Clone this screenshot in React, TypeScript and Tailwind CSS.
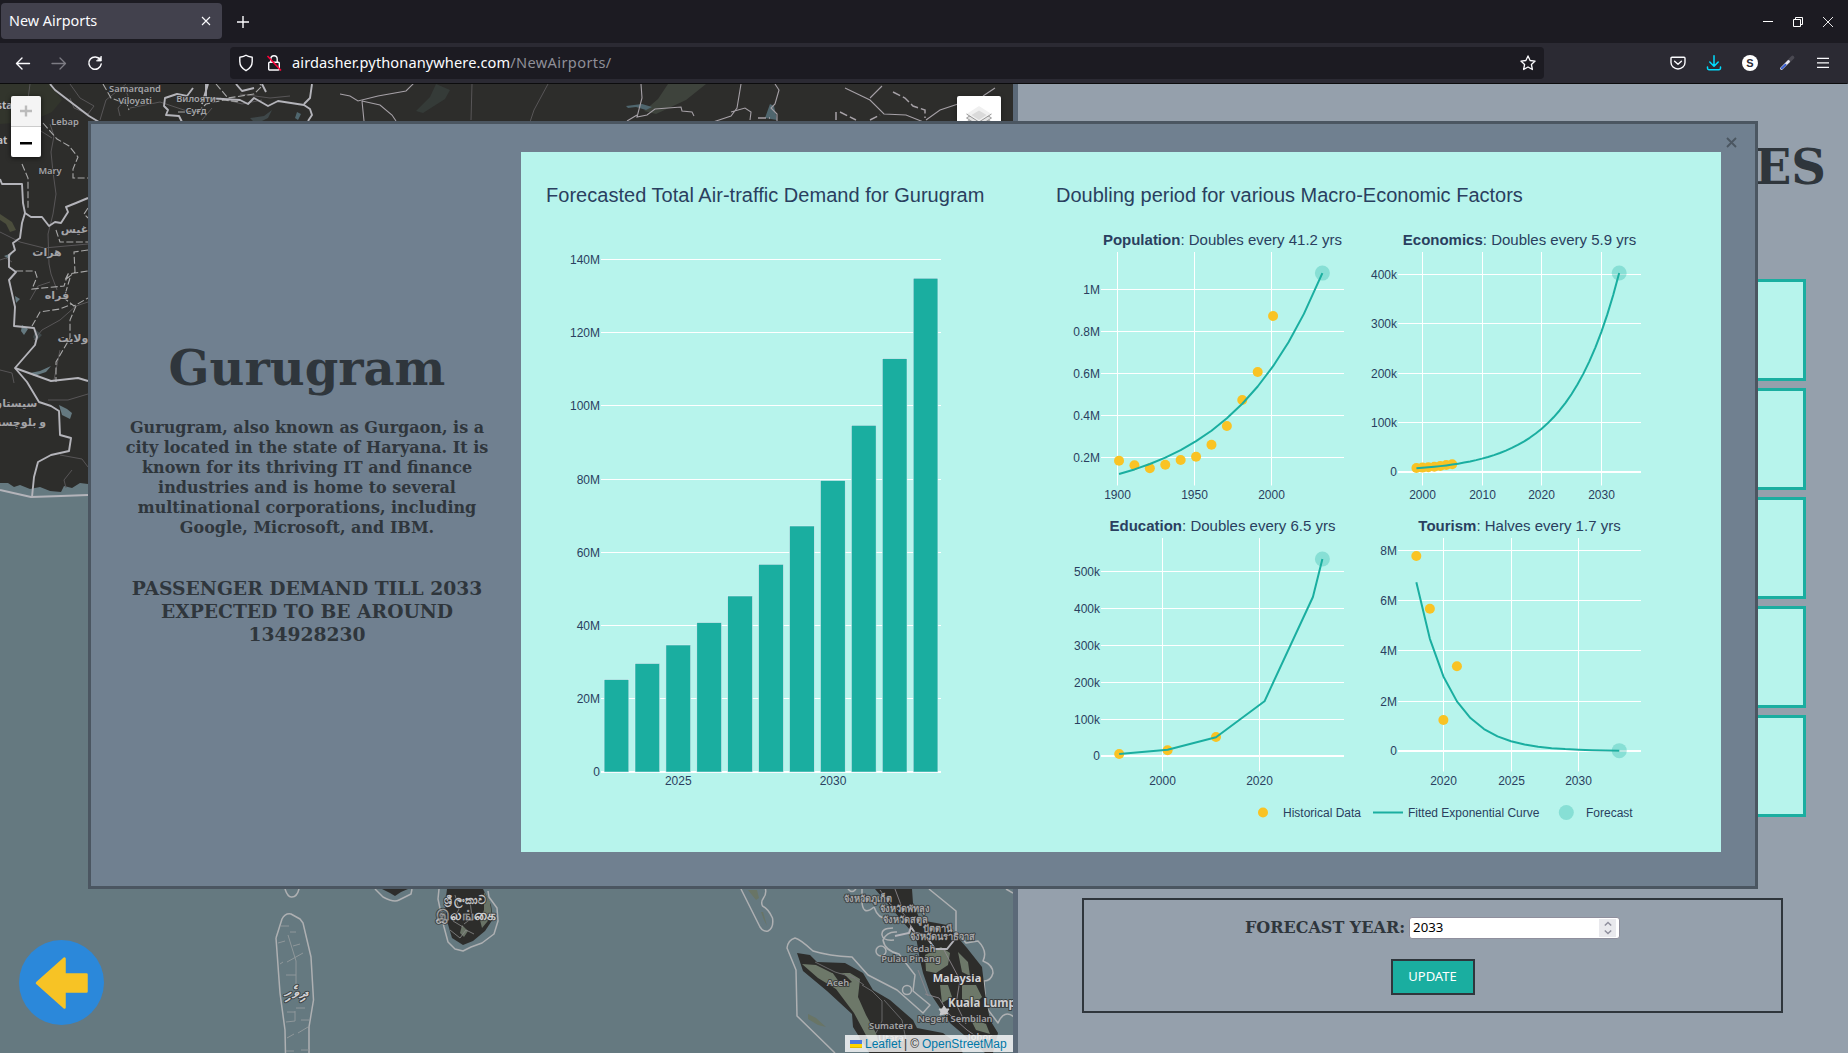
import React from "react";

type Pt = [number, number];

const pts = (list: Pt[]) => list.map((p) => p.join(",")).join(" ");

/* ---------- Browser chrome ---------- */

function TabStrip() {
  return (
    <div className="flex h-[43px] shrink-0 items-center justify-between bg-[#1c1b22]">
      <div className="flex items-center">
        <div className="ml-px mt-[-1px] flex h-9 w-[221px] items-center justify-between rounded bg-[#42414d] pl-2 pr-[11px] text-[14.4px] text-[#fbfbfe]">
          <span>New Airports</span>
          <svg width="10" height="10" viewBox="0 0 10 10" stroke="#fbfbfe" strokeWidth="1.1">
            <path d="M1 1l8 8M9 1l-8 8" />
          </svg>
        </div>
        <svg className="ml-[15px]" width="12" height="12" viewBox="0 0 12 12" stroke="#fbfbfe" strokeWidth="1.4">
          <path d="M6 0v12M0 6h12" />
        </svg>
      </div>
      <div className="flex items-center gap-5 pr-[14px]">
        <svg width="10" height="10" viewBox="0 0 10 10" stroke="#fff">
          <path d="M0 4.500h10" />
        </svg>
        <svg width="10" height="10" viewBox="0 0 10 10" fill="none" stroke="#fff">
          <path d="M.5 2.500h7v7h-7zM2.500 2.500v-2h7v7h-2" />
        </svg>
        <svg width="10" height="10" viewBox="0 0 10 10" stroke="#fff" strokeWidth="0.9">
          <path d="M0 0l10 10M10 0L0 10" />
        </svg>
      </div>
    </div>
  );
}

function Toolbar() {
  return (
    <div className="flex h-[41px] shrink-0 items-center border-b border-[#0c0c0d] bg-[#2b2a33] text-[#fbfbfe]">
      <div className="flex w-[230px] items-center gap-[20px] pl-[15px]">
        <svg width="16" height="16" viewBox="0 0 16 16" fill="none" stroke="#fbfbfe" strokeWidth="1.4" strokeLinecap="round" strokeLinejoin="round">
          <path d="M14.500 8.500H1.500M7 3L1.500 8.500 7 14" />
        </svg>
        <svg width="16" height="16" viewBox="0 0 16 16" fill="none" stroke="#7d7c84" strokeWidth="1.3" strokeLinecap="round" strokeLinejoin="round">
          <path d="M1 8.500h13.500M9 3l5.500 5.500L9 14" />
        </svg>
        <svg width="16" height="18" viewBox="0 0 16 18" fill="none" stroke="#fbfbfe" strokeWidth="1.5" strokeLinecap="round">
          <path d="M13.200 5.600A6.200 6.200 0 1 0 14.200 10" />
          <path d="M14.300 2.500v4.500h-4.500z" fill="#fbfbfe" strokeWidth="0.800" strokeLinejoin="round" />
        </svg>
      </div>
      <div className="flex h-8 w-[1314px] items-center rounded bg-[#1c1b22] pl-2 pr-2">
        <svg width="16" height="18" viewBox="0 0 16 18" fill="none" stroke="#fbfbfe" strokeWidth="1.400" strokeLinejoin="round">
          <path d="M8 1.300C6.300 2.600 3.900 3 1.800 3.300v4.300c0 4 2 7 6.200 9.100 4.200-2.100 6.200-5.100 6.200-9.100V3.300C12.100 3 9.700 2.600 8 1.300z" />
        </svg>
        <svg className="ml-[12px]" width="16" height="18" viewBox="0 0 16 18" fill="none" stroke="#fbfbfe" strokeWidth="1.400">
          <rect x="2.700" y="8.200" width="10.600" height="7.800" rx="1" />
          <path d="M4.800 8V5a3.200 3.200 0 0 1 6.400 0v3" />
          <path d="M1.500 2l13.500 14.500" stroke="#ff0039" strokeWidth="1.600" />
        </svg>
        <span className="ml-[10px] text-[14.600px] whitespace-nowrap">
          <span className="tracking-[0.090px]">airdasher.pythonanywhere.com</span>
          <span className="tracking-[0.370px] text-[#8f8f98]">/NewAirports/</span>
        </span>
        <svg className="ml-auto" width="16" height="16" viewBox="0 0 16 16" fill="none" stroke="#fbfbfe" strokeWidth="1.300" strokeLinejoin="round">
          <path d="M8 .9l2.100 4.600 5 .6-3.700 3.400 1 5L8 12l-4.400 2.500 1-5L.9 6.100l5-.6z" />
        </svg>
      </div>
      <div className="ml-auto flex items-center gap-[20px] pr-[16px]">
        <svg width="16" height="16" viewBox="0 0 16 16" fill="none" stroke="#fbfbfe" strokeWidth="1.400" strokeLinecap="round" strokeLinejoin="round">
          <path d="M2 2.200h12c.6 0 1 .4 1 1V7.500a7 6.500 0 0 1-14 0V3.200c0-.6.4-1 1-1zM4.600 6.200L8 9.200l3.400-3" />
        </svg>
        <svg width="16" height="16" viewBox="0 0 16 16" fill="none" stroke="#00ddff" strokeWidth="1.500" strokeLinecap="round" strokeLinejoin="round">
          <path d="M8 .8v10M3.800 7L8 11.200 12.200 7M1.500 12v1.300c0 .8.6 1.400 1.400 1.400h10.200c.8 0 1.400-.6 1.400-1.400V12" />
        </svg>
        <div className="mr-px flex size-4 items-center justify-center rounded-full bg-white font-['Liberation_Sans'] text-[11px] leading-none font-bold text-[#2b2a33]">S</div>
        <svg width="16" height="16" viewBox="0 0 16 16" strokeLinecap="round">
          <path d="M10 6l3.500-3.500" stroke="#4a4952" strokeWidth="3.600" />
          <path d="M2.500 13.500L9.500 6.500" stroke="#e8e8f4" strokeWidth="2.800" />
          <path d="M2.800 13.200L6.500 9.800" stroke="#3a5fd0" strokeWidth="2" />
        </svg>
        <svg width="16" height="16" viewBox="0 0 16 16" stroke="#fbfbfe" strokeWidth="1.200">
          <path d="M2 3.400h12M2 7.900h12M2 12.400h12" />
        </svg>
      </div>
    </div>
  );
}

/* ---------- Map ---------- */

type Label = { x: number; y: number; t: string; s?: number; c?: string; w?: number; a?: "start" | "middle" | "end" };

const labels: Label[] = [
  { x: 135, y: 92, t: "Samarqand" },
  { x: 135, y: 103.5, t: "Viloyati" },
  { x: 196, y: 102, t: "Вилояти" },
  { x: 196, y: 114, t: "Суғд" },
  { x: 65, y: 125, t: "Lebap" },
  { x: 50, y: 174, t: "Mary" },
  { x: -3, y: 109, t: "sta", s: 10, c: "#bfbfc3", w: 700, a: "start" },
  { x: -3, y: 144, t: "at", s: 10, c: "#bfbfc3", w: 700, a: "start" },
  { x: 76, y: 233, t: "غيس.", s: 11 },
  { x: 47, y: 256, t: "هرات", s: 11 },
  { x: 57, y: 299, t: "فراه", s: 11 },
  { x: 73, y: 342, t: "ولايت", s: 11 },
  { x: 15, y: 407, t: "سيستان", s: 11 },
  { x: 18, y: 426, t: "و بلوچست", s: 11 },
  { x: 868, y: 902, t: "จังหวัดภูเก็ต" },
  { x: 905, y: 912, t: "จังหวัดพัทลุง" },
  { x: 905, y: 923, t: "จังหวัดสตูล" },
  { x: 937, y: 931.5, t: "ปัตตานี" },
  { x: 942, y: 940, t: "จังหวัดนราธิวาส" },
  { x: 921, y: 952, t: "Kedah" },
  { x: 911, y: 961.5, t: "Pulau Pinang" },
  { x: 957, y: 981.5, t: "Malaysia", s: 11, c: "#d6d6d8", w: 700 },
  { x: 948, y: 1006.5, t: "Kuala Lumpur", s: 11.5, c: "#cfcfd1", w: 700, a: "start" },
  { x: 955, y: 1021.500, t: "Negeri Sembilan" },
  { x: 891, y: 1029, t: "Sumatera" },
  { x: 891, y: 1041, t: "Utara" },
  { x: 980, y: 1040, t: "Johor" },
  { x: 838, y: 985.5, t: "Aceh" },
  { x: 465, y: 904, t: "ශ්‍රී ලංකාව", s: 11, c: "#c4c4c6" },
  { x: 466, y: 920, t: "இலங்கை", s: 13.5, c: "#d0d0d2", w: 700 },
  { x: 296, y: 998, t: "ދިވެހި", s: 16, c: "#d0d0d2", w: 700 },
];

function MapCanvas() {
  return (
    <svg className="block h-full w-full bg-[#657980]" viewBox="0 84 1013 969" preserveAspectRatio="none">
      <path
        d="M0 84H1013V700H400V470L88 484 80 483 72 488 64 486 61 492 50 491 40 487 30 489 20 485 14 487 8 483 0 483z"
        fill="#2d2d2b"
      />
      <path d="M0 84H50L62 100 52 112 30 122 0 124z" fill="#32352c" />
      <path d="M668 84h38l-20 16-30 14-12-3 14-12z" fill="#3e433c" />
      <path d="M436 84l14 6-5 9-22 14-7-2 14-14z" fill="#353b38" />
      <path d="M0 214l12 8 4 8-6 2-4-8-6-4z" fill="#4b4d3c" />
      <path d="M59 405l8 4 5 4-2 6-8-4zM30 373l10-2 11-5-5 6-12 4zM22 325l6 4-4 6-3-4zM4 256l8-3-3 6zM15 296l5 3-4 4z" fill="#657980" />
      <path d="M626 106l16-2 10 3-6 3-10-3-8 1zM297 112l4 2-3 6-3-2zM88 100l3 3M80 104l3 4M765 118l5-14 4 2 3 14z" fill="#4f666e" />
      <path d="M250 118l14-2 8-6-4 8-12 6zM36 330l6 5-6 6-3-4z" fill="#3f484a" />

      {/* minor roads */}
      <g fill="none" stroke="#5c5a5c" strokeWidth="0.900">
        <path d="M50 124l4 12-3 16 2 20 3 22-3 20-5 20 1 30 2 10 6 16" />
        <path d="M0 232l20 10 24 6 44-4M30 84l-4 30 10 14 16 10M0 260l6-2 6 4" />
        <path d="M88 302l-12 4-16 14-18 10-8 10M0 370l12 3 2 10M48 400l20 0 20-6M60 455l22 4 6 8" />
        <path d="M70 84l10 14 14 8-6 8-14-6-4-10M124 86l4 10-10 12 2 8" />
        <path d="M472 84l-1 36M548 84l-14 26-4 12M240 94l30 4 20-2M212 108l-10 12M130 108l30-6 30 10M220 98l22 6 20-4" />
        <path d="M100 120l6-20 20-16M30 300l8-14 12-4M60 350l-4 20-2 10M72 470l-8 10 2 8" />
      </g>
      {/* major roads */}
      <g fill="none" stroke="#a5a0a6" strokeWidth="1.100">
        <path d="M340 94l10 2 8 5 20-5 28-5 10-10M362 101l2 20M362 101l18 4 12 10 4 6" />
        <path d="M641 84l1 14-5 19 10-2 8-6 26-2 1 4 10 1 2 4M637 115l-10 6M741 84l-4 24-6 8-18 6M731 112l14-4 6 4-1 8 M775 84l4 6-4 14-4 4 6 6v9" />
        <path d="M845 88l25 12 14 14 22 1 20 8M870 98l12-12M926 120l14-10 18-6M995 88l-12 8" />
        <path d="M758 118l12 0M836 120v-8M840 112l16 8M870 120l10-5M893 92l12 6 8 8 12 4v8" strokeDasharray="8 3" strokeWidth="1.500" />
      </g>
      {/* province borders */}
      <g fill="none" stroke="#a8a8a8" strokeWidth="1.100" strokeDasharray="7 2.500">
        <path d="M43 123l14 16 12 7 9 11-5 12v9h15" />
        <path d="M56 230l4 12h28M88 250l-14 2 1 20-10 8 3-6 20-3M68 274l-4 12-32 3 5-12-2-6-19 0" />
        <path d="M70 278l-6 20 10 8 14-8M76 306l-6 14v18l-14 24v20M32 326l8-14 20-3 12-5" />
        <path d="M22 164l6 14v32M103 84l8 14 16 6 2 6M88 208l-4 6 4 4" />
        <path d="M178 112l20 0 8-8 18-4 16 2M216 84l12 14 26-4 8-8-8-8" />
      </g>
      {/* national borders */}
      <g fill="none" stroke="#b4b4ba" strokeWidth="1.900" strokeLinejoin="round">
        <path d="M50 84l5 6 34 26 10 6" />
        <path d="M0 179l2 5h20l1 19 2 10 6 4 11 0 7 9 6-4 6 1 7-11-2-5 10-4 12-5" />
        <path d="M25 213l-3 10-2 15-7 5 2 7-6 5v12l7 5-7 8 6 27-1 19 20 2 3 9-2 8-20 23 12 14 12 20 12 4 8 5 1 24 11 3-2 13-18 4-13 7-4 15-2 20" />
        <path d="M15 368l36 13 27-3 10 3" />
        <path d="M0 490l31 7 30-1 27-1" />
        <path d="M193 88l-6 8-10-2-12 4-1 8 4 4-2 5 13 1 3 6M206 84v14l34 2 8 4 6-6 14 8 10-5 26 4 6 4 2 6-4 6M312 84l-2 14-6 6" />
        <path d="M236 84l6 7 12-3M262 84l4 8" />
        <path d="M208 84l-6 20" />
      </g>

      {/* Maldives and southern India */}
      <g fill="none" stroke="#aeb0b2" strokeWidth="1.500" strokeLinejoin="round">
        <path d="M285 889q3 9 7 8 5 0 7-8M276 938l6-19q3-6 9-5l9 5 3 4 8 34 2.500 43-4.500 27v26M276 938l4 55 5 37 .5 24" />
        <path d="M375 889l8 8q11 6 16 3l12-6 1-5M439 889l-1 10 6 28 4 15 7 7 8 2 8-4 11-4 12-9 4-13-1-13-8-11-1-6" />
      </g>
      <g fill="none" stroke="#8f979a" strokeWidth="1">
        <path d="M281 926h8M278 943l7-2M288 935l8 26v24M290 932h6M293 946l7-2M287 962l16-9M286 975h10M287 1012h8M296 1008h9M286 1022l9-1v-10M301 1020h8M298 1033l10-6M287 1038l7-4M286 1051h8M301 1050h8M280 964l3-2" />
      </g>
      <path d="M382 889l8 4 5 3 6-4 7-3z" fill="#2d2d2b" />
      <path d="M447 889l-2 16 2 16 5 17 11 7 10-4 12-10 8-12-2-14-8-16z" fill="#2d2d2b" />
      <path d="M484 892l6 10 2 14-10 12-2-8 4-10zM462 925l6 6-4 6-4-4z" fill="#697366" />
      <path d="M450 930l10 8 6-8 8 4M455 895l4 14-6 12 10 6M470 900l2 18-8 6" fill="none" stroke="#8b8b8b" strokeWidth="0.800" />

      {/* Nicobar islands and Sumatra */}
      <g fill="none" stroke="#aeb0b2" strokeWidth="1.500" strokeLinejoin="round">
        <path d="M741 889l19 38q3 5 8 4 6-3 4.500-13-4-9-10-12-2-4 1-8 3-4 2-9" />
        <path d="M835 1053l-38-37-1-46-9-22q1-8 8-10 5 1 18 13 16 5 39 6l16 18 29 15 26 23 7-8-17-14 2-16-10-13-6-8q-14-3-16-14 4-9 14-8M893 928q-12 0-11 7 1 6 12 5M874 907q-12 10-12-7v-11M874 907q4 12 14 12" />
        <path d="M929 889l27 22v20l10 12 12-2q10 10 5 20 10 4 10 12-2 8-9 8l2 26 12 16q6-14 16-6l4 12 7 6v10M848 889q4 5 8 0M1006 889l7 4" />
        <circle cx="881" cy="951" r="5" />
        <circle cx="907" cy="990" r="4.500" />
      </g>
      <path d="M748 890l8 10 3-2-2-8zM761 912l3 8 3 6-4-14zM808 1014l8 4 10 9-8-2-10-6z" fill="#697566" />
      <path d="M797 953l13 2 7 7 28 1 18 10 10 17 17 10 23 20 4 8 26 5 17 13 3 8H870l-17-27-1-13-25-23-24-20z" fill="#2d2d2b" />
      <path d="M802 964l14 1 16 8 18 0 10 6-2 18 8 18 10 18 4 14-12-8-14-26-18-24-18-11z" fill="#6d7869" />
      <path d="M832 972l12 2 8 8-10 4zM856 1020l4 20 8 6z" fill="#2d2d2b" />
      <path d="M862 985l10 6 10 10v20l-6 12M884 1000l18 20 4 20M850 975l14 10M815 962l20 10 20 6" fill="none" stroke="#77777a" strokeWidth="0.800" />

      {/* Malay peninsula */}
      <path d="M875 889h37l1 14 7 17 27 5 20 23 15 19 3 26 5 27 8 13-5 20h-8l-35-30-20-30-7-20-3-13-4-23-23-27z" fill="#2d2d2b" />
      <path d="M925 955l16-8 9 6-2 12-12 8-10-2zM958 952l10 10 2 14-8-4zM962 985l14 0 6 12-8 8-12-6zM940 985l8 0 4 12-10 6zM970 1018l16 6 4 10-14-4z" fill="#6d7869" />
      <path d="M895 936l14-3 2-6 4 6 10 2 10 14 12 0 8-10" fill="none" stroke="#b4b4ba" strokeWidth="2" />
      <path d="M925 994l14 4 10 16 18 16 20 14M880 890l10 14 14 10 8 14M944 950l16 30-4 24 10 20M895 889l6 16M918 970l10 26" fill="none" stroke="#8c878c" strokeWidth="0.900" />
      <path d="M944 1006l2 3 3 0-2 3 1 3-4-1-4 1 1-3-2-3 3 0z" fill="#c9c9cb" stroke="#c9c9cb" />

      <g fontFamily="'Noto Sans','DejaVu Sans',sans-serif" stroke="#2b2b2b" strokeWidth="2" strokeLinejoin="round" className="[paint-order:stroke]">
        {labels.map((l) => (
          <text key={l.t} x={l.x} y={l.y} fontSize={l.s ?? 9.3} fill={l.c ?? "#a3a3a6"} fontWeight={l.w ?? 600} textAnchor={l.a ?? "middle"} strokeOpacity="0.700">
            {l.t}
          </text>
        ))}
      </g>
    </svg>
  );
}

function MapPane() {
  return (
    <div className="relative h-full w-[1013px] shrink-0 overflow-hidden">
      <MapCanvas />
      <div className="absolute top-3 left-[11px] w-[30px] overflow-hidden rounded-xs shadow-[0_1px_5px_rgba(0,0,0,0.65)]">
        <div className="flex h-[31px] items-center justify-center border-b border-[#ccc] bg-[#f4f4f4]">
          <svg width="12" height="12" viewBox="0 0 12 12" stroke="#bbb" strokeWidth="2.400">
            <path d="M6 .5v11M0 6h12" />
          </svg>
        </div>
        <div className="flex h-[30px] items-center justify-center bg-white">
          <svg width="12" height="12" viewBox="0 0 12 12" stroke="#000" strokeWidth="2.400">
            <path d="M0 7.200h12" />
          </svg>
        </div>
      </div>
      <div className="absolute top-3 right-3 flex size-[44px] items-center justify-center rounded-xs bg-white shadow-[0_1px_5px_rgba(0,0,0,0.4)]">
        <svg width="26" height="26" viewBox="0 0 26 26">
          <path d="M13 9L25.500 17 13 25 .5 17z" fill="#d5d5d5" stroke="#8a8a8a" strokeWidth="0.800" />
          <path d="M13 5L25.500 13 13 21 .5 13z" fill="#e3e3e3" stroke="#8a8a8a" strokeWidth="0.800" />
          <path d="M13 1L25.500 9 13 17 .5 9z" fill="#f0f0f0" />
          <path d="M13 5.500L20.500 10 13 15 5.500 10z" fill="#dadada" />
          <path d="M.5 9L13 17 25.500 9" fill="none" stroke="#8a8a8a" strokeWidth="0.900" />
        </svg>
      </div>
      <div className="absolute bottom-[28px] left-[19px] flex size-[85px] items-center justify-center rounded-full bg-[#2b88da]">
        <svg width="54" height="54" viewBox="0 0 54 54">
          <path d="M2 27L29.500 2.500V18.500H51.500V35.500H29.500V51.500z" fill="#f7c325" stroke="#f7c325" strokeWidth="2.500" strokeLinejoin="round" />
        </svg>
      </div>
      <div className="absolute right-0 bottom-px flex h-[17px] w-[168px] items-center bg-white/80 pl-[5px] font-['Liberation_Sans'] text-[12px] whitespace-nowrap text-[#0078a8]">
        <svg className="mr-[3px]" width="12" height="8" viewBox="0 0 12 8">
          <path fill="#4c7be1" d="M0 0h12v4H0z" />
          <path fill="#ffd500" d="M0 4h12v3H0z" />
          <path fill="#e0bc00" d="M0 7h12v1H0z" />
        </svg>
        <span>Leaflet</span>
        <span className="px-[3px] text-[#333]">|</span>
        <span className="pr-[3px] text-[#333]">©</span>
        <span>OpenStreetMap</span>
      </div>
    </div>
  );
}

/* ---------- Side panel ---------- */

function SidePanel() {
  return (
    <div className="flex h-full flex-1 flex-col items-center border-l-[5px] border-[#5b6978] bg-[#95a0ac] pr-px font-['DejaVu_Serif'] font-bold text-[#2f363c]">
      <h1 className="mt-[55px] mr-[21px] self-end text-[48px] leading-[56px]">ES</h1>
      <div className="mt-[84px] flex w-[747px] flex-col gap-[7px]">
        {[0, 1, 2, 3, 4].map((i) => (
          <div key={i} className="h-[102px] border-[3px] border-[#1aaea0] bg-[#b7f4ec]" />
        ))}
      </div>
      <div className="mt-[81px] flex h-[115px] w-[701px] flex-col items-center border-2 border-[#2f363c]">
        <div className="mt-[17px] flex h-[22px] items-center gap-1 text-[16px]">
          <span className="whitespace-nowrap">FORECAST YEAR:</span>
          <div className="flex h-[22px] w-[211px] items-center justify-between rounded-[3px] border border-[#8f8f9d] bg-white pr-[3px] pl-[3px] font-['Noto_Sans'] text-[13.200px] font-normal text-black">
            <span>2033</span>
            <div className="flex h-[18px] w-[17px] items-center justify-center bg-[#e9e9ed]">
              <svg width="8" height="14" viewBox="0 0 8 14" fill="none" stroke="#8f8f9d" strokeWidth="1.500">
                <path d="M.8 4.500L4 1.500l3.200 3M.8 9.500L4 12.500l3.200-3" />
              </svg>
            </div>
          </div>
        </div>
        <div className="mt-5 flex h-9 w-[84px] items-center justify-center border-2 border-[#2f363c] bg-[#1aaea0] font-['Noto_Sans'] text-[13px] font-normal text-white">
          UPDATE
        </div>
      </div>
    </div>
  );
}

/* ---------- Charts ---------- */

const TEAL = "#1aaea0";
const GOLD = "#f9c324";

const barTops = [679.6, 663.5, 645, 622.6, 596, 564.3, 526, 480.6, 425.3, 358.7, 278.2];

function BarChart() {
  const ticks: [string, number][] = [
    ["140M", 259.5], ["120M", 332.5], ["100M", 405.5], ["80M", 479.5], ["60M", 552.5], ["40M", 625.5], ["20M", 698.5],
  ];
  return (
    <g>
      <text x="546" y="201.500" fontSize="20" letterSpacing="0.025">Forecasted Total Air-traffic Demand for Gurugram</text>
      {ticks.map(([t, y]) => (
        <g key={t}>
          <path d={`M601 ${y}H941`} stroke="#fff" />
          <text x="600" y={y + 4.3} textAnchor="end">{t}</text>
        </g>
      ))}
      <path d="M601 772H941" stroke="#fff" strokeWidth="2" />
      <text x="600" y="776" textAnchor="end">0</text>
      {barTops.map((y, i) => (
        <rect key={y} x={604.1 + i * 30.909} y={y} width={24.73} height={772 - y} fill={TEAL} stroke="#e5ecf6" strokeWidth="0.500" />
      ))}
      <text x="678.300" y="784.600" textAnchor="middle">2025</text>
      <text x="833" y="784.600" textAnchor="middle">2030</text>
    </g>
  );
}

type PlotProps = {
  name: string;
  rest: string;
  x0: number;
  x1: number;
  top: number;
  bottom: number;
  xt: [string, number][];
  yt: [string, number][];
  dots: Pt[];
  line: Pt[];
};

function ScatterPlot({ name, rest, x0, x1, top, bottom, xt, yt, dots, line }: PlotProps) {
  const end = line[line.length - 1];
  return (
    <g>
      <text x={(x0 + x1) / 2} y={top - 7} fontSize="15" textAnchor="middle">
        <tspan fontWeight="700">{name}</tspan>
        {rest}
      </text>
      {xt.map(([t, x]) => (
        <g key={t}>
          <path d={`M${x} ${top}V${bottom}`} stroke="#fff" />
          <text x={x} y={bottom + 13.100} textAnchor="middle">{t}</text>
        </g>
      ))}
      {yt.map(([t, y]) => (
        <g key={t}>
          <path d={`M${x0} ${y}H${x1}`} stroke="#fff" strokeWidth={t === "0" ? 2 : 1} />
          <text x={x0 - 1} y={y + 4.200} textAnchor="end">{t}</text>
        </g>
      ))}
      {dots.map(([x, y]) => (
        <circle key={`${x}-${y}`} cx={x} cy={y} r="5" fill={GOLD} />
      ))}
      <polyline points={pts(line)} fill="none" stroke={TEAL} strokeWidth="2" strokeLinejoin="round" />
      <circle cx={end[0]} cy={end[1]} r="7.500" fill={TEAL} fillOpacity="0.300" />
    </g>
  );
}

const popX = (y: number) => 1117.5 + (y - 1900) * 1.5405;
const ecoX = (y: number) => 1422.4 + (y - 2000) * 5.963;
const touX = (y: number) => 1443.4 + (y - 2020) * 13.53;

const popDots: Pt[] = [460.7, 465.3, 468.2, 464.7, 460, 456.7, 444.7, 426, 400, 372, 316].map((y, i) => [popX(1901 + i * 10), y]);
const popLine: Pt[] = [1901, 1911, 1921, 1931, 1941, 1951, 1961, 1971, 1981, 1991, 2001, 2011, 2021, 2033].map((yr) => [
  popX(yr),
  499.5 - 210 * 0.1214 * Math.pow(8.88, (yr - 1901) / 132),
]);
const ecoDots: Pt[] = [468, 467.6, 467.2, 466.7, 466, 465, 464.3].map((y, i) => [ecoX(1999 + i), y]);
const ecoLine: Pt[] = Array.from({ length: 35 }, (_, i) => [ecoX(1999 + i), 472 - 49.33 * 0.0745 * Math.pow(54.15, i / 34)]);
const touLine: Pt[] = Array.from({ length: 16 }, (_, i) => [touX(2018 + i), 751 - 25.1 * 6.72 * Math.pow(0.665, i)]);

function Charts() {
  return (
    <svg
      className="block shrink-0 bg-[#b7f4ec] font-['Liberation_Sans']"
      width="1200"
      height="700"
      viewBox="521 152 1200 700"
      fontSize="12"
      fill="#2a3f5f"
    >
      <BarChart />
      <text x="1056" y="201.500" fontSize="20">Doubling period for various Macro-Economic Factors</text>
      <ScatterPlot
        name="Population"
        rest=": Doubles every 41.2 yrs"
        x0={1101} x1={1344} top={252} bottom={485.500}
        xt={[["1900", 1117.5], ["1950", 1194.5], ["2000", 1271.5]]}
        yt={[["1M", 289.5], ["0.8M", 331.5], ["0.6M", 373.5], ["0.4M", 415.5], ["0.2M", 457.5]]}
        dots={popDots}
        line={popLine}
      />
      <ScatterPlot
        name="Economics"
        rest=": Doubles every 5.9 yrs"
        x0={1398} x1={1641} top={252} bottom={485.500}
        xt={[["2000", 1422.5], ["2010", 1482.5], ["2020", 1541.5], ["2030", 1601.5]]}
        yt={[["400k", 274.5], ["300k", 323.5], ["200k", 373.5], ["100k", 422.5], ["0", 472]]}
        dots={ecoDots}
        line={ecoLine}
      />
      <ScatterPlot
        name="Education"
        rest=": Doubles every 6.5 yrs"
        x0={1101} x1={1344} top={538} bottom={771.500}
        xt={[["2000", 1162.5], ["2020", 1259.5]]}
        yt={[["500k", 571.5], ["400k", 608.5], ["300k", 645.5], ["200k", 682.5], ["100k", 719.5], ["0", 756]]}
        dots={[[1119.2, 754], [1167.6, 750.3], [1216, 737]]}
        line={[[1119.2, 754], [1167.6, 749.8], [1216, 737.3], [1264.5, 701.3], [1312.9, 597], [1322.4, 559]]}
      />
      <ScatterPlot
        name="Tourism"
        rest=": Halves every 1.7 yrs"
        x0={1398} x1={1641} top={538} bottom={771.500}
        xt={[["2020", 1443.5], ["2025", 1511.5], ["2030", 1578.5]]}
        yt={[["8M", 550.5], ["6M", 600.5], ["4M", 650.5], ["2M", 701.5], ["0", 751]]}
        dots={[[touX(2018), 556], [touX(2019), 608.7], [touX(2020), 720], [touX(2021), 666.3]]}
        line={touLine}
      />
      <circle cx="1263" cy="812.500" r="5" fill={GOLD} />
      <text x="1283" y="816.600">Historical Data</text>
      <path d="M1373 812.500H1403" stroke={TEAL} strokeWidth="2" />
      <text x="1408" y="816.600">Fitted Exponential Curve</text>
      <circle cx="1566.300" cy="812.500" r="7.500" fill={TEAL} fillOpacity="0.300" />
      <text x="1586" y="816.600">Forecast</text>
    </svg>
  );
}

/* ---------- Dialog ---------- */

function CityDialog() {
  return (
    <div className="absolute top-[121px] left-[88px] flex h-[768px] w-[1670px] border-[3px] border-[#4b5661] bg-[#708090]">
      <div className="flex w-[430px] shrink-0 flex-col items-center pt-[216px] pl-0.5 text-center font-['DejaVu_Serif'] font-bold text-[#2f363c]">
        <h2 className="text-[48px] leading-[56px]">Gurugram</h2>
        <p className="mt-[22px] text-[16px] leading-[20px] whitespace-nowrap">
          Gurugram, also known as Gurgaon, is a<br />
          city located in the state of Haryana. It is<br />
          known for its thriving IT and finance<br />
          industries and is home to several<br />
          multinational corporations, including<br />
          Google, Microsoft, and IBM.
        </p>
        <p className="mt-[39px] text-[18.720px] leading-[23px] whitespace-nowrap">
          PASSENGER DEMAND TILL 2033<br />
          EXPECTED TO BE AROUND<br />
          134928230
        </p>
      </div>
      <div className="pt-7">
        <Charts />
      </div>
      <svg className="mt-[13px] ml-[5px]" width="11" height="11" viewBox="0 0 11 11" stroke="#4b5661" strokeWidth="1.900">
        <path d="M1 1l9 9M10 1l-9 9" />
      </svg>
    </div>
  );
}

export default function App() {
  return (
    <div className="relative flex h-[1053px] w-[1848px] flex-col overflow-hidden bg-[#95a0ac] font-['Noto_Sans']">
      <div className="bg-[#1c1b22] pr-px">
        <TabStrip />
      </div>
      <div className="bg-[#2b2a33] pr-px">
        <Toolbar />
      </div>
      <div className="flex min-h-0 flex-1">
        <MapPane />
        <SidePanel />
      </div>
      <CityDialog />
    </div>
  );
}
